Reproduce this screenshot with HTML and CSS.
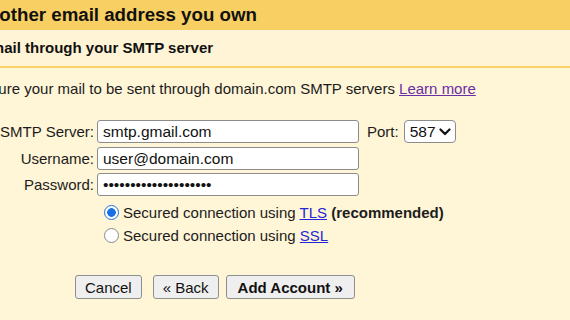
FILE: index.html
```html
<!DOCTYPE html>
<html lang="en">
<head>
  <meta charset="UTF-8">
  <title>Add another email address you own</title>
  <link rel="stylesheet" href="styles.css">
</head>
<body>

<div class="title">
  <h1>Add another email address you own</h1>
</div>

<div class="subtitle">
  <h2>Send mail through your SMTP server</h2>
</div>

<div class="content">
  <p class="intro">Configure your mail to be sent through domain.com SMTP servers <a href="#" class="visited">Learn more</a></p>

  <div class="form">
    <div class="row">
      <label class="label" for="server">SMTP Server:</label>
      <input class="field" type="text" id="server" value="smtp.gmail.com">
      <label class="port-label" for="port">Port:</label>
      <div class="select-wrap">
        <select id="port" class="port">
          <option>587</option>
          <option>465</option>
          <option>25</option>
        </select>
        <svg class="chevron" width="12" height="8" viewBox="0 0 12 8"><path d="M1.5 1.5 L6 6 L10.5 1.5" fill="none" stroke="#111" stroke-width="2.2" stroke-linecap="round" stroke-linejoin="round"/></svg>
      </div>
    </div>
    <div class="row">
      <label class="label" for="user">Username:</label>
      <input class="field" type="text" id="user" value="user@domain.com">
    </div>
    <div class="row">
      <label class="label" for="pass">Password:</label>
      <input class="field" type="password" id="pass" value="xxxxxxxxxxxxxxxxxxxx">
    </div>

    <div class="options">
      <label class="option">
        <input type="radio" name="security" checked>
        <span>Secured connection using <a href="#">TLS</a> <b>(recommended)</b></span>
      </label>
      <label class="option">
        <input type="radio" name="security">
        <span>Secured connection using <a href="#">SSL</a></span>
      </label>
    </div>
  </div>

  <div class="buttons">
    <button class="btn">Cancel</button>
    <button class="btn back">« Back</button>
    <button class="btn primary">Add Account »</button>
  </div>
</div>

</body>
</html>
```

FILE: styles.css
```css
body {
  margin: 0;
  font-family: "Liberation Sans", Arial, sans-serif;
  font-size: 15px;
  color: #1c1c1c;
  background-color: #fff5d7;
  overflow: hidden;
}
.title {
  height: 30px;
  background-color: #f8cf62;
  overflow: hidden;
}
.title h1 {
  margin: 0 0 0 -64px;
  font-size: 18.7px;
  line-height: 30px;
  white-space: nowrap;
  color: #111;
}
.subtitle {
  height: 36px;
  background-color: #fff4d6;
  border-bottom: 2px solid #f9d36a;
  overflow: hidden;
}
.subtitle h2 {
  margin: 0 0 0 -50px;
  font-size: 15px;
  line-height: 36px;
  white-space: nowrap;
  color: #111;
}
.content {
  padding: 12px 0 0 0;
}
.intro {
  margin: 0 0 0 -45px;
  line-height: 18px;
  white-space: nowrap;
}
a {
  color: #2626d9;
}
a.visited {
  color: #6a2ea6;
}
.form {
  margin-top: 22px;
}
.row {
  display: flex;
  align-items: center;
  height: 23px;
  margin-bottom: 3.5px;
}
.label {
  width: 94px;
  text-align: right;
  margin-right: 3px;
}
.field {
  width: 262px;
  height: 23px;
  box-sizing: border-box;
  border: 1px solid #8c8c8c;
  border-radius: 3px;
  padding: 1px 5px 0;
  font-family: "Liberation Sans", Arial, sans-serif;
  font-size: 15.5px;
  color: #111;
  background: #fff;
}
.port-label {
  margin-left: 8px;
}
.select-wrap {
  position: relative;
  margin-left: 5px;
}
.port {
  appearance: none;
  width: 52px;
  height: 23px;
  box-sizing: border-box;
  border: 1px solid #8c8c8c;
  border-radius: 4px;
  padding: 0 0 0 5px;
  font-family: "Liberation Sans", Arial, sans-serif;
  font-size: 15.5px;
  color: #111;
  background: #fff;
}
.chevron {
  position: absolute;
  right: 5px;
  top: 8px;
  pointer-events: none;
}
.options {
  margin: 5px 0 0 104px;
}
.option {
  display: flex;
  align-items: center;
  height: 23px;
}
.option input {
  appearance: none;
  width: 15px;
  height: 15px;
  margin: 0 4px 0 0;
  box-sizing: border-box;
  border: 1px solid #8a8a8a;
  border-radius: 50%;
  background: #fff;
}
.option input:checked {
  border: 1.5px solid #1a6fe6;
  background: radial-gradient(circle, #1a6fe6 0 4px, #fff 4.6px);
}
.buttons {
  display: flex;
  margin: 28px 0 0 75px;
}
.btn {
  height: 24px;
  padding: 0 9px;
  margin-right: 7px;
  border: 1px solid #8e8e8e;
  border-radius: 3px;
  background: #efefef;
  font-family: "Liberation Sans", Arial, sans-serif;
  font-size: 15px;
  color: #111;
}
.btn:first-child {
  margin-right: 11px;
}
.primary {
  padding: 0 11px;
  font-weight: bold;
}
```
